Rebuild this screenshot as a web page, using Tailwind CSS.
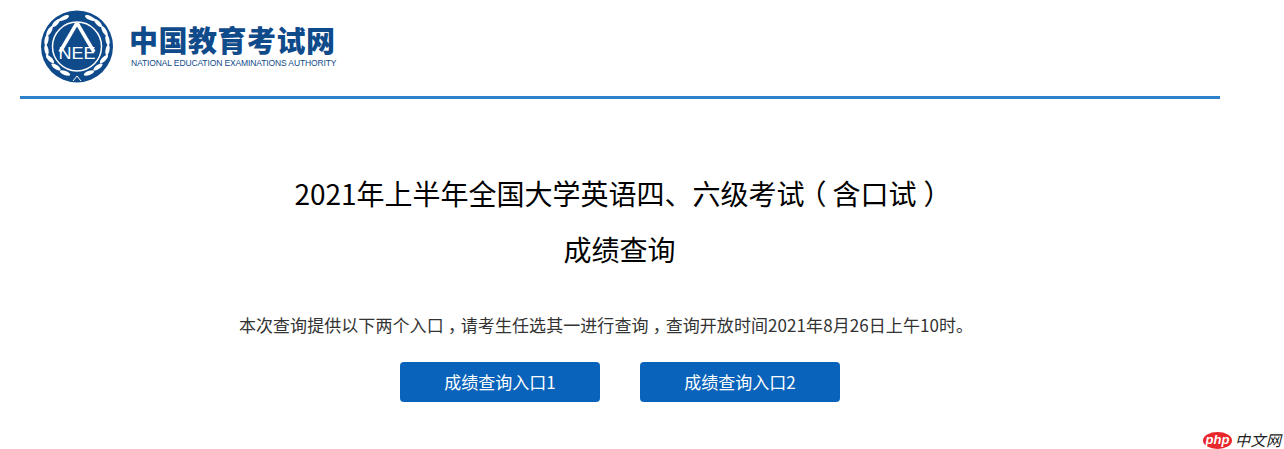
<!DOCTYPE html>
<html lang="zh">
<head>
<meta charset="utf-8">
<script src="https://cdn.jsdelivr.net/npm/@tailwindcss/browser@4"></script>
<title>成绩查询</title>
</head>
<body class="bg-white font-['Noto_Sans_CJK_SC','Noto_Sans',sans-serif] overflow-hidden h-[449px] relative">
<div class="w-[1200px] ml-5">
  <header class="h-[99px] border-b-[3px] border-[#2d82cc] flex items-start pl-5 pt-2.5">
    <svg width="74" height="74" viewBox="0 0 74 74" class="shrink-0">
      <circle cx="37" cy="36.500" r="36" fill="#0f4a8a"/>
      <circle cx="37" cy="36.500" r="24.500" fill="none" stroke="#fff" stroke-width="1.500"/>
      <path d="M37 13 L20 42 M37 13 L54 42" stroke="#fff" stroke-width="3.500" fill="none"/>
      <text x="37" y="49" text-anchor="middle" font-family="Liberation Sans" font-size="16" fill="#fff" textLength="37" lengthAdjust="spacingAndGlyphs">NEE</text>
      <g fill="#fff">
        <ellipse cx="24" cy="8" rx="5.500" ry="2" transform="rotate(-25 24 8)"/>
        <ellipse cx="16" cy="13" rx="5.500" ry="2" transform="rotate(-45 16 13)"/>
        <ellipse cx="9.500" cy="21" rx="5.500" ry="2" transform="rotate(-60 9.500 21)"/>
        <ellipse cx="6.500" cy="30" rx="5.500" ry="2" transform="rotate(-80 6.500 30)"/>
        <ellipse cx="6.500" cy="40" rx="5.500" ry="2" transform="rotate(80 6.500 40)"/>
        <ellipse cx="10" cy="49" rx="5.500" ry="2" transform="rotate(45 10 49)"/>
        <ellipse cx="16" cy="57" rx="5.500" ry="2" transform="rotate(35 16 57)"/>
        <ellipse cx="25" cy="63" rx="5.500" ry="2" transform="rotate(20 25 63)"/>
        <ellipse cx="50" cy="8" rx="5.500" ry="2" transform="rotate(25 50 8)"/>
        <ellipse cx="58" cy="13" rx="5.500" ry="2" transform="rotate(45 58 13)"/>
        <ellipse cx="64.500" cy="21" rx="5.500" ry="2" transform="rotate(60 64.500 21)"/>
        <ellipse cx="67.500" cy="30" rx="5.500" ry="2" transform="rotate(80 67.500 30)"/>
        <ellipse cx="67.500" cy="40" rx="5.500" ry="2" transform="rotate(-80 67.500 40)"/>
        <ellipse cx="64" cy="49" rx="5.500" ry="2" transform="rotate(-45 64 49)"/>
        <ellipse cx="58" cy="57" rx="5.500" ry="2" transform="rotate(-35 58 57)"/>
        <ellipse cx="49" cy="63" rx="5.500" ry="2" transform="rotate(-20 49 63)"/>
      </g>
      <path d="M33 71 L37 66 L41 71" stroke="#fff" stroke-width="1" fill="none"/>
    </svg>
    <div class="ml-[17px] pt-[11px] text-[#0f4a8a]">
      <div class="-ml-[2px] text-[29px] leading-[36px] font-black tracking-[0.500px] whitespace-nowrap w-[205px]">中国教育考试网</div>
      <div class="mt-[1px] font-['Liberation_Sans',sans-serif] text-[8.500px] leading-[11px] tracking-[-0.120px] whitespace-nowrap">NATIONAL EDUCATION EXAMINATIONS AUTHORITY</div>
    </div>
  </header>
  <main class="pt-[66px] text-center">
    <h1 class="-ml-[1px] text-[28px] leading-[56px] text-black font-normal">2021年上半年全国大学英语四、六级考试<span class="[font-feature-settings:'halt'] pl-[8px] pr-[6px]">（</span>含口试<span class="[font-feature-settings:'halt'] px-[7px]">）</span><br>成绩查询</h1>
    <p class="mt-[33px] pr-[28px] text-[17px] leading-[30px] tracking-[0.070px] text-[#333]">本次查询提供以下两个入口<span class="[font-feature-settings:'halt'] px-[4.250px]">，</span>请考生任选其一进行查询<span class="[font-feature-settings:'halt'] px-[4.250px]">，</span>查询开放时间2021年8月26日上午10时。</p>
    <div class="mt-[22px] flex justify-center gap-10">
      <a class="w-[200px] h-10 rounded bg-[#0a63bb] text-white text-[17px] leading-10">成绩查询入口1</a>
      <a class="w-[200px] h-10 rounded bg-[#0a63bb] text-white text-[17px] leading-10">成绩查询入口2</a>
    </div>
  </main>
</div>
<div class="absolute left-[1203px] top-[431px] flex items-center">
  <span class="w-[29px] h-[17px] rounded-[50%] bg-[#e8262b] text-white text-[13px] leading-[15px] italic font-bold text-center font-['Liberation_Sans',sans-serif]">php</span>
  <span class="ml-[3px] text-[15px] leading-[18px] tracking-[0.500px] text-[#222] italic whitespace-nowrap">中文网</span>
</div>
</body>
</html>
